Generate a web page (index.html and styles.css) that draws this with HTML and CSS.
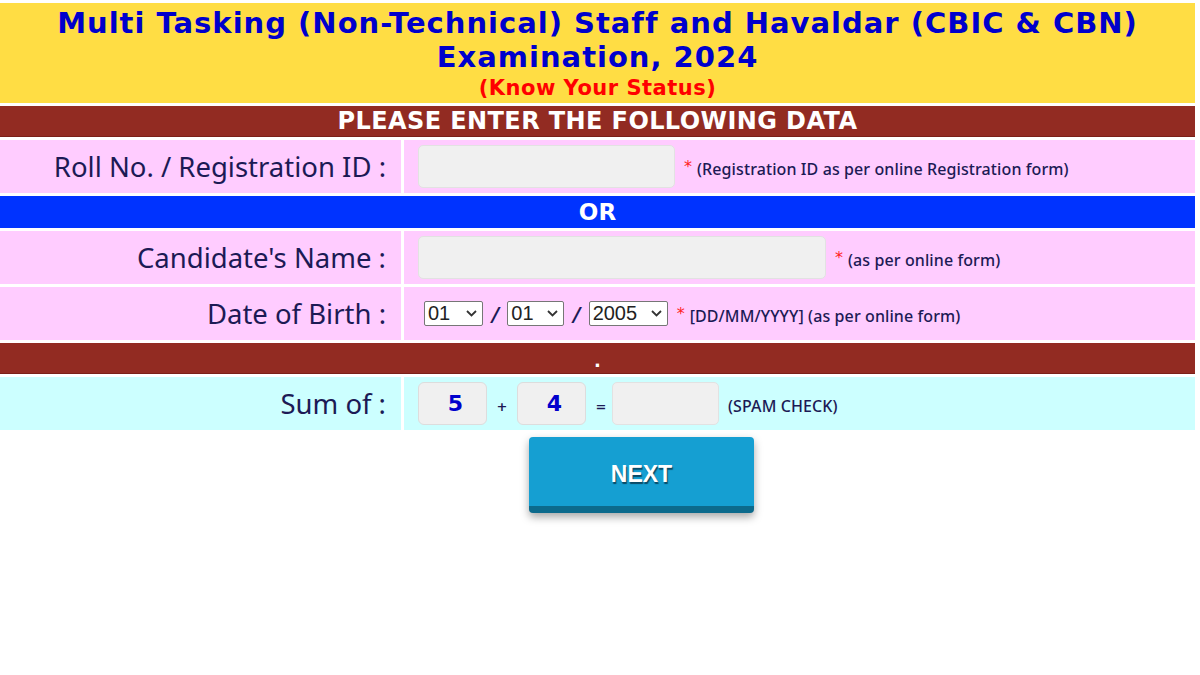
FILE: index.html
```html
<!DOCTYPE html>
<html>
<head>
<meta charset="utf-8">
<link rel="stylesheet" href="styles.css">
</head>
<body>
<div class="page">
  <div class="form">
    <div class="head full">
      <div class="t1">Multi Tasking (Non-Technical) Staff and Havaldar (CBIC &amp; CBN)</div>
      <div class="t1">Examination, 2024</div>
      <div class="t2">(Know Your Status)</div>
    </div>
    <div class="bar full">PLEASE ENTER THE FOLLOWING DATA</div>

    <div class="lab pink">Roll No. / Registration ID :</div>
    <div class="val pink">
      <input class="txt roll" type="text">
      <span class="req">*</span>
      <span class="note">(Registration ID as per online Registration form)</span>
    </div>

    <div class="or full">OR</div>

    <div class="lab pink">Candidate's Name :</div>
    <div class="val pink">
      <input class="txt name" type="text">
      <span class="req">*</span>
      <span class="note">(as per online form)</span>
    </div>

    <div class="lab pink">Date of Birth :</div>
    <div class="val pink dob">
      <span class="selwrap">
        <select class="sel sd"><option>01</option></select>
        <svg class="chev" width="11" height="7" viewBox="0 0 11 7"><path d="M1 1 L5.5 5.5 L10 1" fill="none" stroke="#333" stroke-width="1.8"/></svg>
      </span>
      <span class="slash">/</span>
      <span class="selwrap">
        <select class="sel sm"><option>01</option></select>
        <svg class="chev" width="11" height="7" viewBox="0 0 11 7"><path d="M1 1 L5.5 5.5 L10 1" fill="none" stroke="#333" stroke-width="1.8"/></svg>
      </span>
      <span class="slash">/</span>
      <span class="selwrap">
        <select class="sel sy"><option>2005</option></select>
        <svg class="chev" width="11" height="7" viewBox="0 0 11 7"><path d="M1 1 L5.5 5.5 L10 1" fill="none" stroke="#333" stroke-width="1.8"/></svg>
      </span>
      <span class="req">*</span>
      <span class="note">[DD/MM/YYYY] (as per online form)</span>
    </div>

    <div class="bar dotbar full">.</div>

    <div class="lab cyan">Sum of :</div>
    <div class="val cyan">
      <div class="num">5</div>
      <span class="op">+</span>
      <div class="num">4</div>
      <span class="op">=</span>
      <input class="txt ans" type="text">
      <span class="note spam">(SPAM CHECK)</span>
    </div>
  </div>
  <div class="btnrow">
    <button class="next">NEXT</button>
  </div>
</div>
</body>
</html>
```
FILE: styles.css
```css
html, body {
  margin: 0;
  padding: 0;
  background: #ffffff;
}
.page {
  width: 1195px;
  padding-top: 3px;
  padding-bottom: 160px;
}
.form {
  display: grid;
  grid-template-columns: 401px 1fr;
  gap: 3px;
}
.full {
  grid-column: 1 / -1;
}
.head {
  background: #ffdd44;
  height: 100px;
  text-align: center;
  font-family: "DejaVu Sans", Verdana, sans-serif;
  font-weight: bold;
  box-sizing: border-box;
  padding-top: 3px;
}
.t1 {
  color: #0000cc;
  font-size: 29px;
  letter-spacing: 1px;
  line-height: 34px;
}
.t2 {
  color: #ff0000;
  font-size: 21px;
  letter-spacing: 0.5px;
  line-height: 24px;
  margin-top: 2px;
}
.bar {
  background: #922b22;
  height: 30px;
  color: #ffffff;
  text-align: center;
  font-family: "DejaVu Sans", sans-serif;
  font-weight: bold;
  font-size: 24px;
  letter-spacing: 0.4px;
  line-height: 31px;
  border-bottom: 1px solid #7a2018;
}
.dotbar {
  font-size: 18px;
  line-height: 36px;
}
.or {
  background: #0033ff;
  height: 32px;
  color: #ffffff;
  text-align: center;
  font-family: "DejaVu Sans", sans-serif;
  font-weight: bold;
  font-size: 23px;
  line-height: 33px;
}
.pink {
  background: #ffccff;
}
.cyan {
  background: #ccffff;
}
.lab, .val {
  height: 53px;
  display: flex;
  align-items: center;
}
.lab {
  justify-content: flex-end;
  padding-right: 15px;
  font-family: "Noto Sans", sans-serif;
  font-size: 27.5px;
  color: #1c1a55;
}
.val {
  padding-left: 14px;
}
.txt {
  box-sizing: border-box;
  height: 43px;
  background: #f0f0f0;
  border: 1px solid #e2e2e2;
  border-radius: 5px;
  margin: 0;
  outline: none;
}
.roll {
  width: 257px;
}
.name {
  width: 408px;
}
.req {
  color: #ff2222;
  font-family: "DejaVu Sans", sans-serif;
  font-size: 16px;
  margin-left: 9px;
  margin-right: 5px;
  position: relative;
  top: 0;
}
.note {
  font-family: "Noto Sans", sans-serif;
  font-size: 16px;
  letter-spacing: 0.1px;
  color: #1c1a55;
  font-weight: 500;
  position: relative;
  top: 2px;
}
.dob {
  padding-left: 20px;
}
.selwrap {
  position: relative;
  display: inline-flex;
}
.sel {
  box-sizing: border-box;
  -webkit-appearance: none;
  appearance: none;
  font-family: "Liberation Sans", Arial, sans-serif;
  font-size: 20px;
  height: 25px;
  line-height: 23px;
  background: #ffffff;
  border: 1px solid #767676;
  border-radius: 2px;
  color: #222;
  padding: 0 0 0 3px;
  margin: 0;
}
.chev {
  position: absolute;
  right: 6px;
  top: 9px;
  pointer-events: none;
}
.sd {
  width: 59px;
}
.sm {
  width: 57px;
}
.sy {
  width: 79px;
}
.slash {
  font-family: "DejaVu Sans", sans-serif;
  font-weight: bold;
  font-style: italic;
  font-size: 20px;
  color: #1c1a55;
  margin: 0 8px 0 9px;
}
.dob .req {
  margin-left: 9px;
  margin-right: 5px;
}
.num {
  box-sizing: border-box;
  width: 69px;
  height: 43px;
  background: #f0f0f0;
  border: 1px solid #dddddd;
  border-radius: 6px;
  display: flex;
  align-items: center;
  justify-content: center;
  font-family: "DejaVu Sans", Verdana, sans-serif;
  font-weight: bold;
  font-size: 22px;
  color: #0000cc;
  padding-left: 6px;
}
.op {
  font-family: "DejaVu Sans", sans-serif;
  font-weight: bold;
  font-size: 13px;
  color: #1c1a55;
  width: 30px;
  text-align: center;
  position: relative;
  top: 3px;
}
.op + .txt.ans {
  margin-left: -4px;
}
.ans {
  width: 107px;
}
.spam {
  margin-left: 9px;
}
.btnrow {
  padding-top: 7px;
  padding-left: 529px;
}
.next {
  box-sizing: border-box;
  width: 225px;
  height: 76px;
  background: #159fd2;
  border: none;
  border-bottom: 7px solid #0c6a8c;
  border-radius: 4px;
  box-shadow: 0 4px 9px rgba(0, 0, 0, 0.35);
  color: #ffffff;
  font-family: "Liberation Sans", Arial, sans-serif;
  font-weight: bold;
  font-size: 23px;
  text-shadow: 1px 2px 1px #0a4a66;
  padding: 6px 0 0 0;
  margin: 0;
}
```
